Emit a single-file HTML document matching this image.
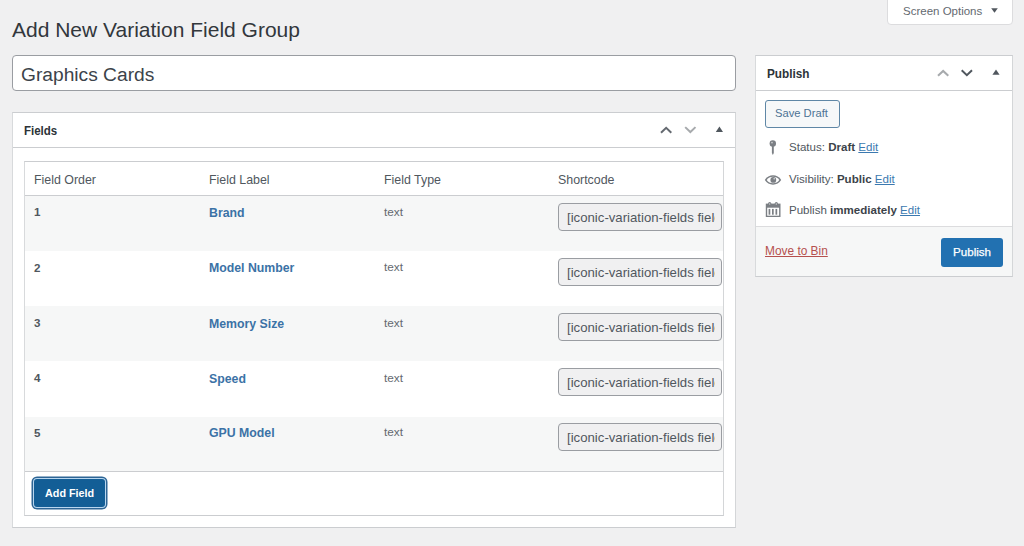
<!DOCTYPE html>
<html><head><meta charset="utf-8">
<style>
*{box-sizing:border-box;margin:0;padding:0}
html,body{width:1024px;height:546px;overflow:hidden;background:#f0f0f1;font-family:"Liberation Sans",sans-serif;color:#3c434a;position:relative}
.a{position:absolute;white-space:nowrap}
.t{line-height:1}
.box{position:absolute;background:#fff;border:1px solid #cbcdd0;border-left-color:#d8dadc;border-right-color:#d4d6d8}
.hl{position:absolute;height:1px;background:#cbcdd0}
.th{position:absolute;white-space:nowrap;line-height:1;font-size:12.4px;color:#50575e;top:174px}
.num{position:absolute;line-height:1;font-size:11.6px;font-weight:bold;color:#50575e;left:34px;margin-top:-0.5px}
.lbl{position:absolute;white-space:nowrap;line-height:1;font-size:12.3px;font-weight:bold;color:#3b72a6;left:209px}
.typ{position:absolute;line-height:1;font-size:11.8px;color:#646970;left:384px}
.sc{position:absolute;left:558px;width:164px;height:28px;border:1px solid #9a9da2;border-radius:4px;background:#f0f0f1}
.sc div{position:absolute;left:8px;top:0;width:147.5px;height:26px;overflow:hidden}
.sc span{position:absolute;left:0;top:7px;line-height:1;font-size:13.2px;color:#50575e;white-space:nowrap}
.row{position:absolute;left:25px;width:698px;height:55px;background:#f6f7f7}
.ps{position:absolute;line-height:1;font-size:11.55px;color:#50575e;left:789px;white-space:nowrap}
.ps b{color:#3c434a}
.ps u{color:#3b79b0;text-decoration:underline}
</style></head><body>
<!-- Screen options -->
<div class="box" style="left:887px;top:-2px;width:126px;height:27px;border-radius:0 0 4px 4px;border-color:#dcdcde"></div>
<div class="a t" style="left:903px;top:5.5px;font-size:11.5px;color:#646970">Screen Options</div>
<svg class="a" style="left:990px;top:7px" width="9" height="7" viewBox="0 0 9 7"><path d="M1.2 1.2 H7.8 L4.5 5.8 Z" fill="#50575e"/></svg>

<!-- Title -->
<div class="a t" style="left:12px;top:19px;font-size:21px;color:#32373c">Add New Variation Field Group</div>

<!-- Title input -->
<div class="box" style="left:12px;top:55px;width:724px;height:36px;border-radius:4px;border-color:#9a9da2"></div>
<div class="a t" style="left:21px;top:64.5px;font-size:19.2px;color:#3c434a">Graphics Cards</div>

<!-- Fields postbox -->
<div class="box" style="left:12px;top:112px;width:724px;height:416px"></div>
<div class="hl" style="left:13px;top:147px;width:722px"></div>
<div class="a t" style="left:24px;top:123.8px;font-size:13px;font-weight:bold;color:#2c3338;transform:scaleX(0.885);transform-origin:0 0">Fields</div>
<!-- handle icons -->
<svg class="a" style="left:658px;top:122px" width="70" height="16" viewBox="0 0 70 16"><g transform="translate(2.3 4.4)">
  <path d="M0.7 6.3 L5.85 1.41 L11 6.3" fill="none" stroke="#646970" stroke-width="2"/>
  <path d="M24.9 0.7 L30.05 5.6 L35.2 0.7" fill="none" stroke="#a7aaad" stroke-width="2"/>
  <path d="M55.5 5.6 L59.1 0 L62.7 5.6 Z" fill="#50575e"/></g>
</svg>

<!-- inner table -->
<div class="box" style="left:24px;top:161px;width:700px;height:355px"></div>
<div class="hl" style="left:25px;top:195px;width:698px"></div>
<div class="th" style="left:34px">Field Order</div>
<div class="th" style="left:209px">Field Label</div>
<div class="th" style="left:384px">Field Type</div>
<div class="th" style="left:558px">Shortcode</div>

<div class="row" style="top:196px"></div>
<div class="row" style="top:306px"></div>
<div class="row" style="top:416.5px;height:54.5px"></div>
<div class="hl" style="left:25px;top:471px;width:698px"></div>

<div class="num" style="top:206.6px">1</div>
<div class="lbl" style="top:206.6px">Brand</div>
<div class="typ" style="top:206.6px">text</div>
<div class="sc" style="top:203px"><div><span>[iconic-variation-fields field="brand"]</span></div></div>

<div class="num" style="top:262px">2</div>
<div class="lbl" style="top:262px">Model Number</div>
<div class="typ" style="top:262px">text</div>
<div class="sc" style="top:258px"><div><span>[iconic-variation-fields field="model_number"]</span></div></div>

<div class="num" style="top:317.5px">3</div>
<div class="lbl" style="top:317.5px">Memory Size</div>
<div class="typ" style="top:317.5px">text</div>
<div class="sc" style="top:313px"><div><span>[iconic-variation-fields field="memory_size"]</span></div></div>

<div class="num" style="top:372.3px">4</div>
<div class="lbl" style="top:373px">Speed</div>
<div class="typ" style="top:373px">text</div>
<div class="sc" style="top:368px"><div><span>[iconic-variation-fields field="speed"]</span></div></div>

<div class="num" style="top:427px">5</div>
<div class="lbl" style="top:427px">GPU Model</div>
<div class="typ" style="top:427px">text</div>
<div class="sc" style="top:423px"><div><span>[iconic-variation-fields field="gpu_model"]</span></div></div>

<!-- Add Field button -->
<div class="a" style="left:34px;top:479px;width:71px;height:27.8px;border-radius:3px;background:#135e96;box-shadow:0 0 0 1px #b9d6ef,0 0 0 2.5px #2d6595"></div>
<div class="a t" style="left:45px;top:488px;font-size:10.8px;font-weight:bold;color:#fff">Add Field</div>

<!-- Publish box -->
<div class="box" style="left:755px;top:55px;width:258px;height:222px"></div>
<div class="hl" style="left:756px;top:90px;width:256px"></div>
<div class="a t" style="left:767px;top:67px;font-size:13px;font-weight:bold;color:#2c3338;transform:scaleX(0.905);transform-origin:0 0">Publish</div>
<svg class="a" style="left:935px;top:66px" width="70" height="16" viewBox="0 0 70 16"><g transform="translate(2.3 3.5)">
  <path d="M0.7 6.3 L5.85 1.41 L11 6.3" fill="none" stroke="#a7aaad" stroke-width="2"/>
  <path d="M24.4 0.7 L29.55 5.6 L34.7 0.7" fill="none" stroke="#50575e" stroke-width="2"/>
  <path d="M55.1 5.3 L58.7 0 L62.3 5.3 Z" fill="#50575e"/></g>
</svg>

<div class="a" style="left:765px;top:100px;width:75px;height:28px;border:1px solid #5f87a6;border-radius:3px;background:#f6f8f9"></div>
<div class="a t" style="left:775px;top:108px;font-size:11.2px;color:#4d7394">Save Draft</div>

<!-- pin -->
<svg class="a" style="left:764px;top:137px" width="18" height="20" viewBox="0 0 18 20">
  <circle cx="8.8" cy="6.5" r="3.2" fill="#7b7f84"/>
  <circle cx="8" cy="5.6" r="0.9" fill="#c9cbcd"/>
  <path d="M7.9 9 H9.8 V16 L8.85 18 L7.9 16 Z" fill="#7b7f84"/>
</svg>
<div class="ps" style="top:142px">Status: <b>Draft</b> <u>Edit</u></div>

<!-- eye -->
<svg class="a" style="left:764px;top:172px" width="18" height="16" viewBox="0 0 18 16">
  <path d="M0.8 8 C4.5 1.8 13.5 1.8 17.2 8 C13.5 14.2 4.5 14.2 0.8 8 Z" fill="#7b7f84"/>
  <path d="M2.7 8 C5.5 3.6 12.5 3.6 15.3 8 C12.5 12.4 5.5 12.4 2.7 8 Z" fill="#fff"/>
  <circle cx="9.3" cy="7.9" r="2.9" fill="#7b7f84"/>
  <circle cx="10.2" cy="6.7" r="0.8" fill="#d8dadc"/>
</svg>
<div class="ps" style="top:174px">Visibility: <b>Public</b> <u>Edit</u></div>

<!-- calendar -->
<svg class="a" style="left:765px;top:201px" width="17" height="17" viewBox="0 0 17 17">
  <rect x="0.8" y="2.6" width="14.7" height="13.4" fill="#7b7f84"/>
  <rect x="2.2" y="6.7" width="11.9" height="8" fill="#fff"/>
  <rect x="3.6" y="7.9" width="1.7" height="5.8" fill="#7b7f84"/>
  <rect x="7.0" y="7.9" width="1.7" height="5.8" fill="#7b7f84"/>
  <rect x="10.5" y="7.9" width="1.7" height="5.8" fill="#7b7f84"/>
  <circle cx="4.7" cy="2.6" r="1.6" fill="#7b7f84"/>
  <circle cx="11.3" cy="2.6" r="1.6" fill="#7b7f84"/>
  <circle cx="4.7" cy="3" r="0.7" fill="#d0d2d4"/>
  <circle cx="11.3" cy="3" r="0.7" fill="#d0d2d4"/>
</svg>
<div class="ps" style="top:205px">Publish <b>immediately</b> <u>Edit</u></div>

<!-- footer -->
<div class="a" style="left:756px;top:226px;width:256px;height:50px;background:#f6f7f7;border-top:1px solid #dcdcde"></div>
<div class="a t" style="left:765px;top:246px;font-size:11.9px;color:#b5504e;text-decoration:underline">Move to Bin</div>
<div class="a" style="left:941px;top:237.5px;width:62px;height:29px;border-radius:3px;background:#2271b1"></div>
<div class="a t" style="left:953px;top:246px;font-size:11.6px;color:#fff;-webkit-text-stroke:0.25px #fff">Publish</div>
</body></html>
